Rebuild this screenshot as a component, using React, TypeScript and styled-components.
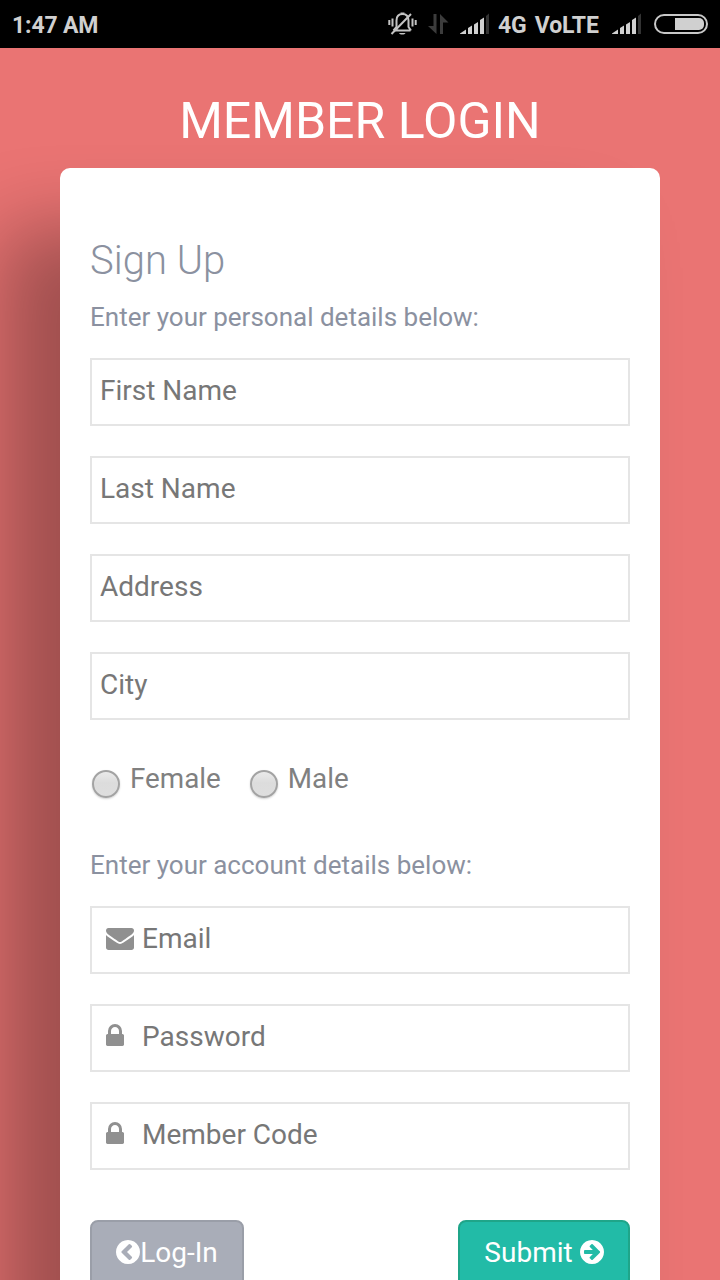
import React from 'react';
import styled, { createGlobalStyle } from 'styled-components';

const GlobalStyle = createGlobalStyle`
  * {
    box-sizing: border-box;
  }
  body {
    margin: 0;
    font-family: Roboto, sans-serif;
  }
`;

const Screen = styled.div`
  display: flex;
  flex-direction: column;
  height: 1280px;
  overflow: hidden;
  background: #ea7473;
`;

const StatusBar = styled.header`
  display: flex;
  align-items: center;
  justify-content: space-between;
  flex: none;
  height: 48px;
  padding: 4px 12px 0 12px;
  background: #000;
  color: #d0d0d0;
  font-size: 23px;
  font-weight: 700;
  line-height: 28px;
  white-space: nowrap;
`;

const StatusIcons = styled.svg`
  display: block;
  flex: none;
  margin-top: -4px;
`;

const StatusGroup = styled.div`
  display: flex;
  align-items: center;
`;

const Clock = styled.span`
  letter-spacing: -0.15px;
`;

const Network = styled.span`
  width: 102px;
  margin: 0 12px 0 8px;
  letter-spacing: -0.1px;
  word-spacing: 2.5px;
`;

const Title = styled.h1`
  flex: none;
  height: 120px;
  margin: 0;
  color: #fff;
  font-size: 50px;
  font-weight: 400;
  line-height: 146px;
  text-align: center;
`;

const Card = styled.form`
  flex: none;
  height: 1240px;
  margin: 0 60px;
  padding: 71px 30px 0;
  border-radius: 10px;
  background: #fff;
  box-shadow: -60px 60px 80px rgba(0, 0, 0, 0.32);
`;

const Heading = styled.h2`
  height: 60px;
  margin: 0;
  color: #8b91a0;
  font-size: 40px;
  font-weight: 300;
  line-height: 44px;
`;

const Hint = styled.p`
  margin: 0 0 23px;
  color: #8b91a0;
  font-size: 26px;
  line-height: 36px;
`;

const Field = styled.label`
  display: flex;
  align-items: center;
  height: 68px;
  margin-bottom: 30px;
  padding: 0 8px;
  border: 2px solid #e5e5e5;
  background: #fff;
`;

const FieldIcon = styled.span`
  display: flex;
  flex: none;
  width: 42px;
  padding: 0 0 4px 6px;
  color: #909090;
`;

const Input = styled.input`
  flex: 1;
  min-width: 0;
  height: 60px;
  padding: 0 0 4px;
  border: none;
  outline: none;
  background: none;
  font-family: inherit;
  font-size: 28px;

  &::placeholder {
    color: #777;
    opacity: 1;
  }
`;

const Genders = styled.div`
  display: flex;
  gap: 27px;
  height: 85px;
  margin: 42px 0 0;
`;

const Gender = styled.label`
  display: flex;
  color: #808080;
  font-size: 27.8px;
  line-height: 33px;
`;

const Radio = styled.input`
  appearance: none;
  flex: none;
  width: 28px;
  height: 28px;
  margin: 8px 10px 0 2px;
  border: 2px solid #a3a3a3;
  border-radius: 50%;
  background: linear-gradient(#eaeaea, #dcdcdc 45%, #dedede);
  box-shadow: 0 1px 2px rgba(0, 0, 0, 0.18);
`;

const Actions = styled.div`
  display: flex;
  justify-content: space-between;
  margin-top: 50px;
`;

const Button = styled.button<{ $primary?: boolean }>`
  display: flex;
  align-items: center;
  justify-content: center;
  gap: ${({ $primary }) => ($primary ? 7 : 0)}px;
  width: ${({ $primary }) => ($primary ? 172 : 154)}px;
  height: 68px;
  padding: 0 0 4px;
  border: 2px solid ${({ $primary }) => ($primary ? '#1fa589' : '#9a9ea8')};
  border-radius: 8px;
  background: ${({ $primary }) => ($primary ? '#22bba7' : '#a9adb8')};
  color: #fff;
  font-family: inherit;
  font-size: 28px;
`;

const ENVELOPE = 'M1792 826v-794q0-66-47-113t-113-47h-1472q-66 0-113 47t-47 113v794q44-49 101-87 362-246 497-345 57-42 92.5-65.5t94.5-48 110-24.5h2q51 0 110 24.500t94.500 48 92.500 65.500q170 123 498 345 57 39 100 87zM1792 1120q0-79-49-151t-122-123q-376-261-468-325-10-7-42.500-31t-54-38.800-52-33.200-57.500-27.800-50-9.200h-2q-23 0-50 9.200t-57.500 27.800-52 33.200-54 38.800-42.500 31q-91 64-262 182.500t-205 142.500q-62 42-117 115.500t-55 136.500q0 78 41.500 130t118.500 52h1472q65 0 112.500-47t47.500-113z';
const LOCK = 'M320 768h512v192q0 106-75 181t-181 75-181-75-75-181v-192zM1152 672v-576q0-40-28-68t-68-28h-960q-40 0-68 28t-28 68v576q0 40 28 68t68 28h32v192q0 184 132 316t316 132 316-132 132-316v-192h32q40 0 68-28t28-68z';
const CIRCLE = 'M1536 640q0-209-103-385.500t-279.500-279.500-385.500-103-385.500 103-279.500 279.500-103 385.500 103 385.500 279.500 279.500 385.500 103 385.500-103 279.500-279.500 103-385.500z';
const CHEVRON_LEFT = 'M909 141l102 102q19 19 19 45t-19 45l-307 307 307 307q19 19 19 45t-19 45l-102 102q-19 19-45 19t-45-19l-454-454q-19-19-19-45t19-45l454-454q19-19 45-19t45 19z';
const ARROW_RIGHT = 'M1285 640q0 27-18 45l-91 91-362 362q-18 18-45 18t-45-18l-91-91q-18-18-18-45t18-45l189-189h-502q-26 0-45-19t-19-45v-128q0-26 19-45t45-19h502l-189-189q-19-19-19-45t19-45l91-91q18-18 45-18t45 18l362 362 91 91q18 18 18 45z';

interface GlyphProps {
  path: string;
  width: number;
  height: number;
  top: number;
}

// The paths use font units with y pointing up, 64 units to a pixel
const Glyph = ({ path, width, height, top }: GlyphProps) => (
  <svg width={width / 64} height={height / 64} viewBox={`0 0 ${width} ${height}`}
    fill="currentColor" fillRule="evenodd">
    <path transform={`translate(0 ${top}) scale(1 -1)`} d={path} />
  </svg>
);

const EnvelopeIcon = () => <Glyph path={ENVELOPE} width={1792} height={1792} top={1536} />;
const LockIcon = () => <Glyph path={LOCK} width={1152} height={1792} top={1536} />;

const MutedIcon = () => (
  <StatusIcons width="30" height="28" viewBox="0 0 30 28" fill="none" stroke="#c4c4c4" strokeWidth="2">
    <path d="M6 20.500h16.500M8.500 20V10.500C8.500 6 11 4 14.500 4S20.500 6 20.500 10.500V17l2.500 3.500M8.500 17l-3 3.500M12.500 3.500h4" />
    <path d="M11 23h6.500c-.8 2-5.700 2-6.500 0z" fill="#c4c4c4" stroke="none" />
    <path d="M4.500 8.500v8M1.300 10v5M24.500 8.500v8M27.700 10v5M3.500 24L23 4" />
  </StatusIcons>
);

const DataIcon = () => (
  <StatusIcons width="22" height="22" viewBox="0 0 22 22" fill="#3c3c3c">
    <path d="M5.500 1h3v20L0 13h5.500zM12 21V1l8.500 8.500H15V21z" />
  </StatusIcons>
);

const SignalIcon = () => (
  <StatusIcons width="30" height="22" viewBox="0 0 30 22" fill="#d0d0d0">
    <path d="M0 21V20.500l6-4V21zM8 15l4-2.500V21H8zM14 11.500l4-2.500v12h-4zM20 7l4-2.500V21h-4z" />
    <path d="M26 3l3-2.500V21h-3z" fill="#333" />
  </StatusIcons>
);

const BatteryIcon = () => (
  <StatusIcons width="54" height="20" viewBox="0 0 54 20">
    <rect x="1" y="1" width="52" height="18" rx="9" fill="none" stroke="#c8c8c8" strokeWidth="2" />
    <path d="M21 4h24a5 5 0 0 1 5 5v2a5 5 0 0 1-5 5H21z" fill="#d0d0d0" />
  </StatusIcons>
);

const Spacer = styled.span<{ $size: number }>`
  width: ${({ $size }) => $size}px;
`;

const personalFields = ['First Name', 'Last Name', 'Address', 'City'];

const accountFields = [
  { label: 'Email', type: 'email', icon: <EnvelopeIcon /> },
  { label: 'Password', type: 'password', icon: <LockIcon /> },
  { label: 'Member Code', type: 'text', icon: <LockIcon /> },
];

const App = () => (
  <Screen>
    <GlobalStyle />
    <StatusBar>
      <Clock>1:47 AM</Clock>
      <StatusGroup>
        <MutedIcon />
        <Spacer $size={10} />
        <DataIcon />
        <Spacer $size={10} />
        <SignalIcon />
        <Network>4G VoLTE</Network>
        <SignalIcon />
        <Spacer $size={12} />
        <BatteryIcon />
      </StatusGroup>
    </StatusBar>
    <Title>MEMBER LOGIN</Title>
    <Card onSubmit={e => e.preventDefault()}>
      <Heading>Sign Up</Heading>
      <Hint>Enter your personal details below:</Hint>
      {personalFields.map(label => (
        <Field key={label}>
          <Input type="text" placeholder={label} />
        </Field>
      ))}
      <Genders>
        {['Female', 'Male'].map(gender => (
          <Gender key={gender}>
            <Radio type="radio" name="gender" value={gender} />
            {gender}
          </Gender>
        ))}
      </Genders>
      <Hint>Enter your account details below:</Hint>
      {accountFields.map(({ label, type, icon }) => (
        <Field key={label}>
          <FieldIcon>{icon}</FieldIcon>
          <Input type={type} placeholder={label} />
        </Field>
      ))}
      <Actions>
        <Button type="button">
          <Glyph path={CIRCLE + CHEVRON_LEFT} width={1536} height={1536} top={1408} />
          Log-In
        </Button>
        <Button type="submit" $primary>
          Submit
          <Glyph path={CIRCLE + ARROW_RIGHT} width={1536} height={1536} top={1408} />
        </Button>
      </Actions>
    </Card>
  </Screen>
);

export default App;
